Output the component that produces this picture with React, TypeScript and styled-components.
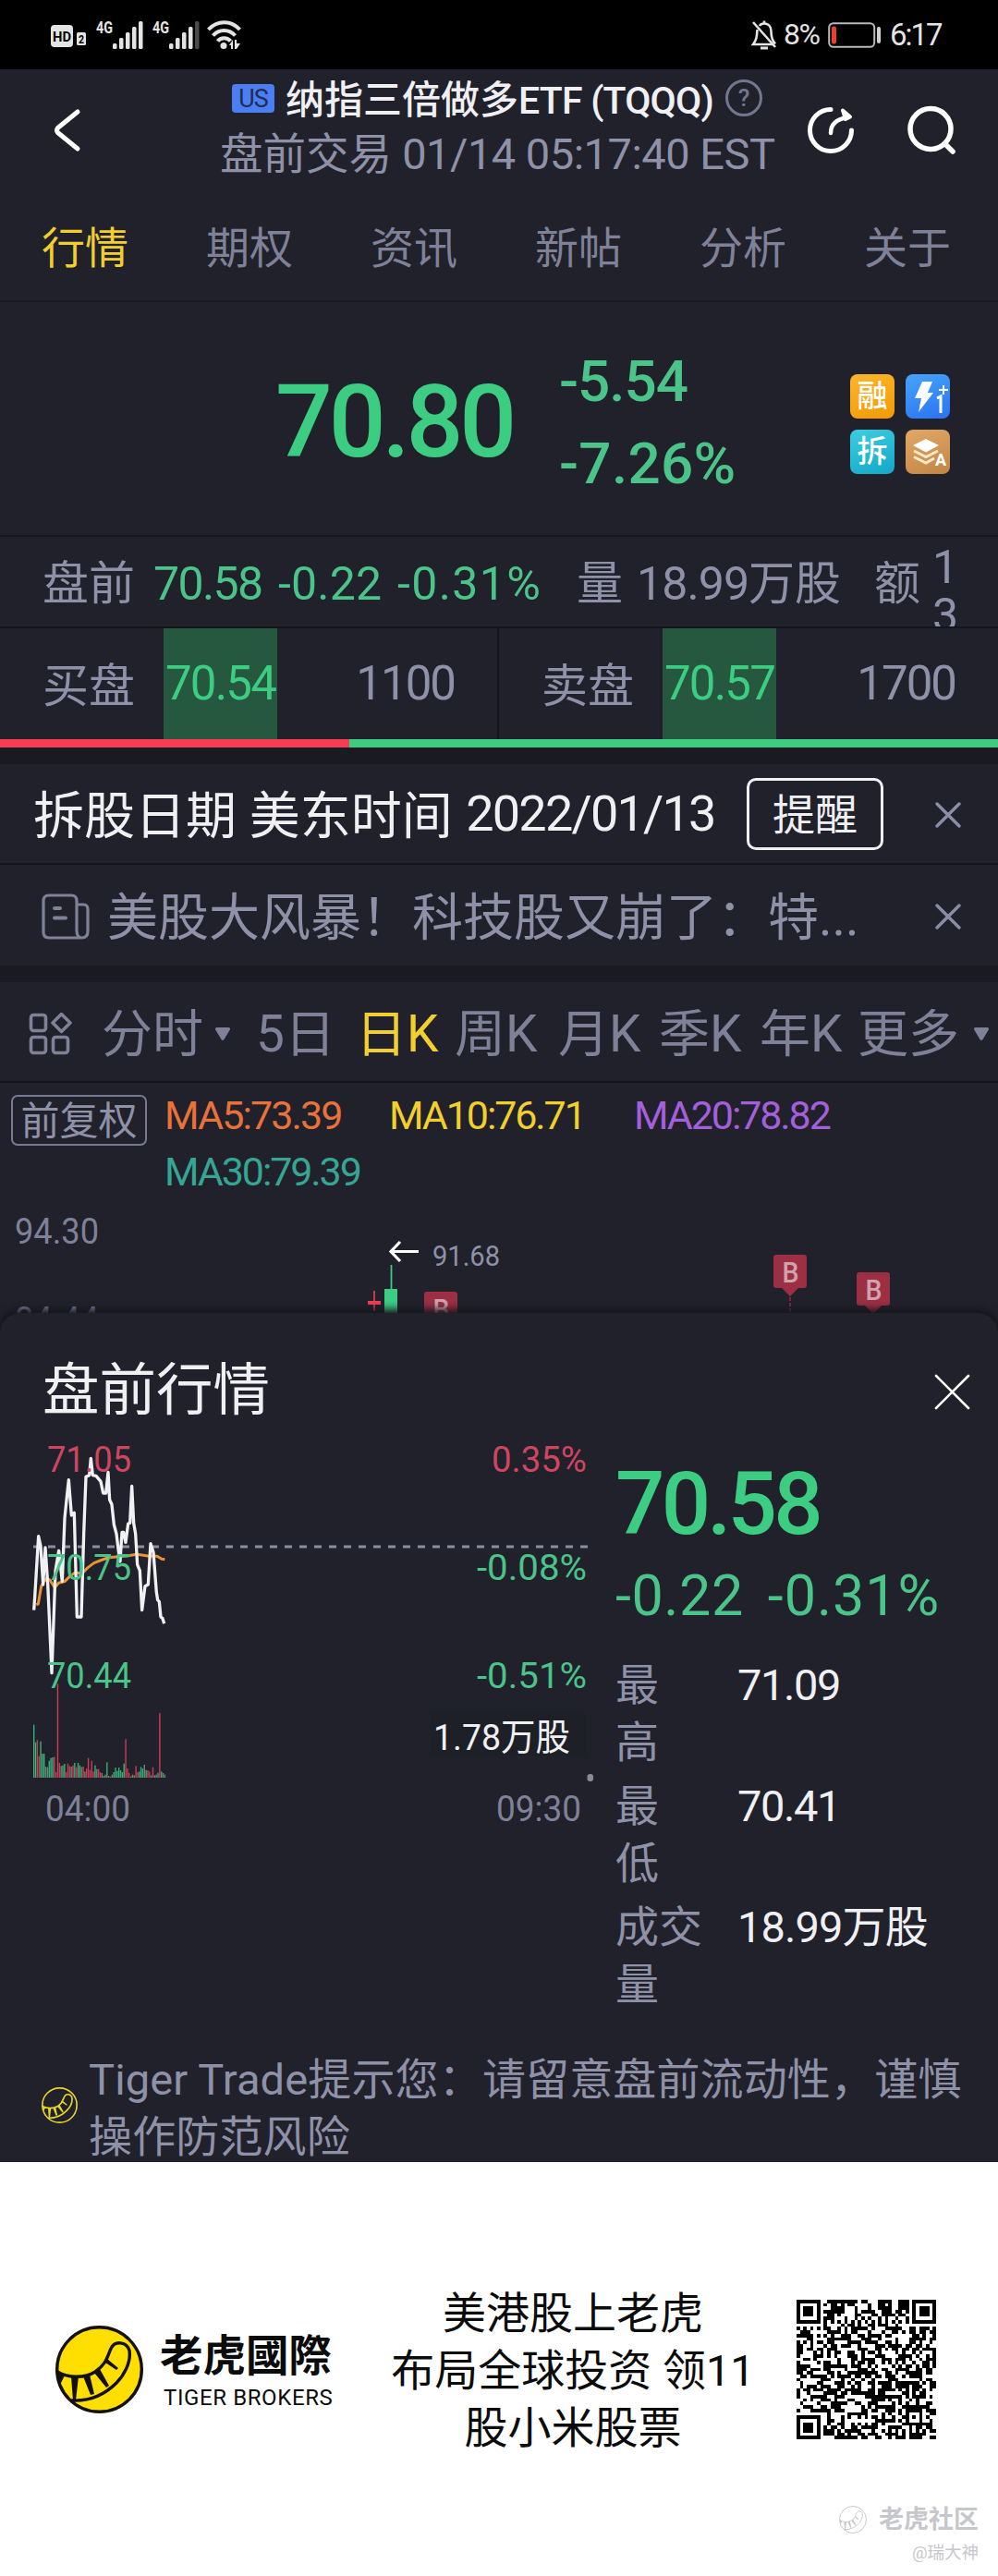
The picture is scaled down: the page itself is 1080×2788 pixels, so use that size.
import type { ReactNode } from 'react';
import styled, { createGlobalStyle } from 'styled-components';

const colors = {
  bg: '#20212b',
  gap: '#1a1a23',
  line: '#15151d',
  muted: '#8f91a9',
  dim: '#7f8198',
  white: '#f0f0f2',
  green: '#3ccd83',
  softGreen: '#4bc489',
  red: '#f63d53',
  yellow: '#f2cf2e',
};

const GlobalStyle = createGlobalStyle`
  * {
    box-sizing: border-box;
  }
  body {
    margin: 0;
    background: #fff;
    font-family: Roboto, 'Noto Sans CJK SC', sans-serif;
    line-height: 1.2;
  }
  svg {
    display: block;
    flex: none;
  }
`;

const Page = styled.div`
  width: 1080px;
  height: 2788px;
  overflow: hidden;
  background: ${colors.bg};
  color: ${colors.muted};
`;

const Text = styled.span<{
  $size: number;
  $color?: string;
  $spacing?: number;
  $weight?: number;
}>`
  font-size: ${(p) => p.$size}px;
  color: ${(p) => p.$color || 'inherit'};
  letter-spacing: ${(p) => p.$spacing || 0}px;
  font-weight: ${(p) => p.$weight || 400};
  white-space: pre;
`;

/* ---------- status bar ---------- */

const StatusBar = styled.div`
  display: flex;
  justify-content: space-between;
  align-items: center;
  height: 75px;
  padding: 0 57px 0 55px;
  background: #000;
`;

const StatusRight = styled.div`
  display: flex;
  align-items: center;
  color: #e4e4e4;
`;

const StatusValue = styled(Text)`
  margin-left: 7px;
  width: 48px;
`;

const Clock = styled(Text)`
  margin-left: 9px;
  width: 60px;
`;

/* ---------- header ---------- */

const Header = styled.header`
  display: grid;
  grid-template-columns: 182px 635px 108px 64px;
  align-items: center;
  height: 132px;
  padding-left: 56px;
`;

const TitleBlock = styled.div`
  display: flex;
  flex-direction: column;
  padding-bottom: 5px;
`;

const TitleLine = styled.div`
  display: flex;
  align-items: center;
  height: 56px;
  padding-left: 13px;
`;

const SubtitleLine = styled.div`
  height: 58px;
  line-height: 58px;
`;

const MarketTag = styled.span`
  flex: none;
  width: 46px;
  height: 31px;
  margin: 0 12px 6px 0;
  border-radius: 4px;
  background: #4b7ef3;
  color: #222c55;
  font-size: 27px;
  letter-spacing: -1px;
  line-height: 32px;
  text-align: center;
`;

const HelpMark = styled.span`
  flex: none;
  width: 40px;
  height: 40px;
  margin: 0 0 8px 13px;
  border: 3px solid #74768e;
  border-radius: 50%;
  color: #74768e;
  font-size: 26px;
  font-weight: 500;
  line-height: 34px;
  text-align: center;
`;

const Tabs = styled.nav`
  display: grid;
  grid-template-columns: repeat(6, 178px);
  align-items: center;
  height: 120px;
  padding: 7px 0 0 45px;
  border-bottom: 2px solid #191a22;
  color: ${colors.dim};
`;

/* ---------- quote ---------- */

const Quote = styled.section`
  display: grid;
  grid-template-columns: 307px 315px 108px;
  align-items: center;
  height: 254px;
  padding: 8px 0 0 298px;
  border-bottom: 2px solid ${colors.line};
`;

const Changes = styled.div`
  display: flex;
  flex-direction: column;
  line-height: 89px;
`;

const Badges = styled.div`
  display: grid;
  grid-template-columns: 48px 48px;
  gap: 12px;
  padding-top: 4px;
`;

const Badge = styled.span<{ $from: string; $to: string }>`
  display: flex;
  align-items: center;
  justify-content: center;
  height: 48px;
  border-radius: 8px;
  background: linear-gradient(160deg, ${(p) => p.$from}, ${(p) => p.$to});
  color: #fff;
  font-size: 33px;
  font-weight: 500;
  line-height: 50px;
`;

const PreMarketRow = styled.div`
  display: grid;
  grid-template-columns: 120px 135px 129px 194px 65px 257px 63px 30px;
  grid-template-rows: 96px;
  align-items: center;
  height: 99px;
  padding: 3px 0 0 46px;
  overflow: hidden;
  border-bottom: 2px solid ${colors.line};
`;

const Amount = styled.span`
  align-self: start;
  width: 28px;
  margin-top: 4px;
  font-size: 50px;
  line-height: 52px;
  word-break: break-all;
`;

const BidAsk = styled.section`
  display: grid;
  grid-template-columns: 1fr 1fr;
  height: 120px;
`;

const Side = styled.div`
  display: grid;
  grid-template-columns: 131px 123px 1fr;
  align-items: center;
  padding: 0 46px;
  &:first-child {
    border-right: 2px solid ${colors.line};
  }
`;

const SideLabel = styled(Text)`
  padding-top: 5px;
`;

const SidePrice = styled.span`
  display: flex;
  align-items: center;
  justify-content: center;
  height: 120px;
  background: #26573f;
  color: ${colors.green};
`;

const SideVolume = styled.span`
  text-align: right;
`;

const RatioBar = styled.div`
  display: flex;
  height: 9px;
  background: ${colors.green};
`;

const RatioBuy = styled.div`
  width: 35%;
  background: ${colors.red};
`;

const Gap = styled.div`
  height: 18px;
  background: ${colors.gap};
`;

/* ---------- notices ---------- */

const Notice = styled.div<{ $line?: boolean }>`
  display: flex;
  align-items: center;
  height: 109px;
  padding: 2px 40px 0 36px;
  border-bottom: ${(p) => (p.$line ? `2px solid ${colors.line}` : 'none')};
`;

const NoticeTitle = styled(Text)`
  padding-top: 3px;
`;

const NoticeDate = styled(Text)`
  margin-left: 3px;
`;

const RemindButton = styled.button`
  width: 148px;
  height: 78px;
  margin: 0 56px 2px auto;
  padding: 0;
  border: 3px solid ${colors.white};
  border-radius: 10px;
  background: none;
  color: ${colors.white};
  font-family: inherit;
  font-size: 46px;
  line-height: 74px;
`;

const NoticeText = styled(Text)`
  flex: 1;
  margin-left: 19px;
  padding-top: 3px;
`;

const NoticeIcon = styled.span`
  margin-left: 9px;
`;

/* ---------- k line ---------- */

const Periods = styled.nav`
  display: grid;
  grid-template-columns: 79px 122px 45px 108px 107px 112px 109px 109px 106px 125px 20px;
  align-items: center;
  height: 109px;
  padding: 5px 0 0 31px;
  border-bottom: 2px solid ${colors.line};
  color: ${colors.dim};
`;

const Averages = styled.div`
  display: grid;
  grid-template-columns: 166px 243px 265px 1fr;
  height: 126px;
  padding: 5px 0 0 12px;
  line-height: 61px;
`;

const AdjustTag = styled.span`
  grid-row: span 2;
  width: 147px;
  height: 55px;
  margin-top: 8px;
  border: 2px solid #777990;
  border-radius: 7px;
  font-size: 42px;
  line-height: 54px;
  text-align: center;
`;

/* ---------- pre-market sheet ---------- */

const Sheet = styled.section`
  position: relative;
  height: 919px;
  margin-top: -25px;
  overflow: hidden;
  border-radius: 22px 22px 0 0;
  background: ${colors.bg};
  box-shadow: 0 -2px 8px 2px #15151c;
`;

const SheetHeader = styled.div`
  display: flex;
  justify-content: space-between;
  align-items: center;
  height: 139px;
  padding: 31px 30px 0 46px;
`;

const SheetBody = styled.div`
  display: grid;
  grid-template-columns: 666px 1fr;
  height: 660px;
`;

const Detail = styled.div`
  display: flex;
  flex-direction: column;
  padding-top: 23px;
`;

const DetailPrice = styled(Text)`
  height: 90px;
  line-height: 90px;
`;

const DetailChanges = styled.div`
  display: flex;
  gap: 26px;
  height: 80px;
  margin: 14px 0 26px;
  line-height: 80px;
`;

const Stat = styled.div`
  display: grid;
  grid-template-columns: 98px 1fr;
  gap: 34px;
  min-height: 131px;
  font-size: 47px;
  line-height: 62px;
`;

const StatLabel = styled.span<{ $narrow?: boolean }>`
  width: ${(p) => (p.$narrow ? 60 : 98)}px;
`;

const StatValue = styled.span<{ $spacing: number }>`
  color: ${colors.white};
  letter-spacing: ${(p) => p.$spacing}px;
`;

const Tip = styled.div`
  display: flex;
  align-items: flex-start;
  padding-left: 45px;
  font-size: 47px;
  letter-spacing: 0.14px;
  line-height: 62px;
  white-space: nowrap;
`;

const TipIcon = styled.span`
  margin: 39px 12px 0 0;
`;

/* ---------- promo ---------- */

const Promo = styled.footer`
  position: relative;
  display: grid;
  grid-template-columns: 113px 242px 410px 1fr;
  align-items: center;
  height: 448px;
  padding-left: 60px;
  background: #fff;
  color: #0c0c0c;
`;

const BrandName = styled.div`
  display: flex;
  flex-direction: column;
  padding-top: 7px;
  line-height: 54px;
`;

const BrandLatin = styled(Text)`
  padding-left: 4px;
  line-height: 36px;
`;

const Slogan = styled.div`
  padding-top: 3px;
  font-size: 47px;
  line-height: 62px;
  text-align: center;
  white-space: pre-line;
`;

const QrHolder = styled.div`
  padding-left: 37px;
`;

const Watermark = styled.div`
  position: absolute;
  right: 21px;
  bottom: 11px;
  display: flex;
  flex-direction: column;
  align-items: flex-end;
  color: #c6c7cb;
`;

const WatermarkLine = styled.div`
  display: flex;
  align-items: center;
  gap: 13px;
  font-size: 27px;
  font-weight: 700;
  line-height: 34px;
`;

const WatermarkUser = styled.div`
  margin-top: 6px;
  font-size: 18.5px;
  line-height: 27px;
`;

/* ---------- icons ---------- */

const StatusIcons = () => (
  <svg width="210" height="40" viewBox="0 0 210 40" fill="#e4e4e4">
    <rect x="0" y="9" width="24" height="24" rx="4" />
    <text x="2" y="26.5" fontSize="15" fontWeight="700" textLength="20" lengthAdjust="spacingAndGlyphs" fill="#000">HD</text>
    <rect x="28" y="17" width="10" height="14" rx="1.5" />
    <text x="30" y="28.5" fontSize="12" fontWeight="700" textLength="6" lengthAdjust="spacingAndGlyphs" fill="#000">2</text>
    <text x="49" y="17.5" fontSize="18" fontWeight="700" textLength="18" lengthAdjust="spacingAndGlyphs">4G</text>
    <text x="110" y="17.5" fontSize="18" fontWeight="700" textLength="18" lengthAdjust="spacingAndGlyphs">4G</text>
    {[0, 1, 2, 3, 4].map((i) => (
      <rect key={i} x={67 + i * 7} y={29 - i * 6} width="4.5" height={6 + i * 6} rx="1.5" />
    ))}
    {[0, 1, 2, 3, 4].map((i) => (
      <rect key={i} x={128 + i * 7} y={29 - i * 6} width="4.5" height={6 + i * 6} rx="1.5" fill={i === 4 ? '#4a4a4a' : '#e4e4e4'} />
    ))}
    <g fill="none" stroke="#e4e4e4" strokeWidth="4">
      <path d="M170.500 14 C180 3.500 195 3.500 204.500 14" />
      <path d="M175.500 20.500 C182 13 193 13 199.500 20.500" />
      <path d="M180.500 26.500 C184 22 191 22 194.500 26.500" />
    </g>
    <circle cx="187" cy="31.500" r="3.500" />
    <path d="M193 31 l4 -6 v10 h-2 v-4z M199 25 h2 v4 h4 l-4 6 h-2z" />
  </svg>
);

const MutedBell = () => (
  <svg width="28" height="34" viewBox="0 0 28 34" fill="none" stroke="#e4e4e4" strokeWidth="2.6">
    <path d="M9 7 C10 5 12 4.500 14 4.500 C19 4.500 21.500 8.500 21.500 13 C21.500 20 22.500 23 26 26.500" />
    <path d="M6.500 11 C6 18 6 22 2 27 H23" />
    <path d="M2 3 L26 30" />
    <path d="M10 31 H18" strokeWidth="3" />
    <path d="M14 1.500 V4.500" />
  </svg>
);

const Battery = () => (
  <svg width="58" height="28" viewBox="0 0 58 28">
    <rect x="1.200" y="1.200" width="49" height="25.600" rx="4.500" fill="none" stroke="#b9b9b9" strokeWidth="2" />
    <rect x="4" y="4.500" width="5" height="19" rx="2" fill="#e8402c" />
    <rect x="53" y="5" width="4" height="18" rx="2" fill="#d0d0d0" />
  </svg>
);

const BackIcon = () => (
  <svg width="32" height="48" viewBox="0 0 32 48" fill="none" stroke="#fff" strokeWidth="5" strokeLinecap="round" strokeLinejoin="round">
    <path d="M28 4 L6.500 21.500 Q4.500 24 6.500 26.500 L28 44" />
  </svg>
);

const ShareIcon = () => (
  <svg width="52" height="52" viewBox="0 0 52 52" fill="none" stroke="#fff" strokeWidth="5" strokeLinecap="round" strokeLinejoin="round">
    <path d="M26 3.500 A22.500 22.500 0 1 0 48.500 26" />
    <path d="M26 29 C26 20 32 14 44 12" strokeWidth="4.500" />
    <path d="M39 4.500 L47 11.500 L42 14 Z" strokeWidth="4" fill="#fff" />
  </svg>
);

const SearchIcon = () => (
  <svg width="54" height="54" viewBox="0 0 54 54" fill="none" stroke="#fff" strokeWidth="5.500" strokeLinecap="round">
    <circle cx="26" cy="25.500" r="22" />
    <path d="M42 42 L50 50" />
  </svg>
);

const CloseIcon = ({ size, color, width }: { size: number; color: string; width: number }) => (
  <svg width={size} height={size} viewBox={`0 0 ${size} ${size}`} stroke={color} strokeWidth={width} strokeLinecap="round">
    <path d={`M2 2 L${size - 2} ${size - 2} M${size - 2} 2 L2 ${size - 2}`} />
  </svg>
);

const NewsIcon = () => (
  <svg width="52" height="50" viewBox="0 0 52 50" fill="none" stroke="#7f8198" strokeWidth="3.200" strokeLinecap="round">
    <path d="M38 12 V40 Q38 48 43.500 48 Q50 48 50 41 V17 Q50 12 45 12 H38 V8 Q38 2 32 2 H8 Q2 2 2 8 V42 Q2 48 8 48 H43" />
    <path d="M14 16 h6 M14 26.500 h12" strokeWidth="4" />
  </svg>
);

const GridIcon = () => (
  <svg width="48" height="46" viewBox="0 0 48 46" fill="none" stroke="#7f8198" strokeWidth="3.600">
    <rect x="2.500" y="2.500" width="16" height="17" rx="3" />
    <rect x="2.500" y="26.500" width="16" height="17" rx="3" />
    <rect x="26.500" y="26.500" width="16" height="17" rx="3" />
    <path d="M35.500 1.500 L45 11 L35.500 20.500 L26 11 Z" strokeLinejoin="round" />
  </svg>
);

const Caret = () => (
  <svg width="18" height="15" viewBox="0 0 18 15" fill="#7f8198">
    <path d="M2.500 0 H15.500 Q18 0.500 16.500 3 L10.500 13 Q9 15 7.500 13 L1.500 3 Q0 0.500 2.500 0Z" />
  </svg>
);

const BoltIcon = () => (
  <svg width="48" height="48" viewBox="0 0 48 48" fill="#fff">
    <path d="M18 8 H29 L24 20 H30 L14 41 L17 26 H10 Z" />
    <path d="M41 12 v10 M36 17 h10" stroke="#fff" strokeWidth="2" />
    <path d="M34 26 L38 24 V42" fill="none" stroke="#fff" strokeWidth="3" />
  </svg>
);

const LayersIcon = () => (
  <svg width="48" height="48" viewBox="0 0 48 48" fill="#fff">
    <path d="M22 10 L36 17 L22 24.500 L8 17 Z" />
    <path d="M9 23 L22 29.500 L35 23 M9 29.500 L22 36 L31 31" fill="none" stroke="#ffe9cc" strokeWidth="3" />
    <text x="32" y="39" fontSize="18" fontWeight="700">A</text>
  </svg>
);

const TailLogo = ({ size, line, fill, width }: { size: number; line: string; fill: string; width: number }) => (
  <svg width={size} height={size} viewBox="0 0 95 95" fill="none" stroke={line} strokeWidth={width} strokeLinecap="round" strokeLinejoin="round">
    <circle cx="47.500" cy="47.500" r={47.5 - width / 2} fill={fill} />
    <path d="M2 50 C14 57 32 57 43 50 C56 41 56 33 60 25 C64 16 77 17 80 27 C82 40 74 54 66 62 C54 74 38 82 18 81" />
    <path
      d="M2 48 L10 54 L5 64 Z M17 55 H25 L22 81 H19 Z M30 55 L37 53 L42 74 L38 75 Z M42 51 L48 47 L58 65 L55 67 Z M54 40 L56 36 L68 46 L66 48 Z"
      fill={line}
      stroke="none"
    />
  </svg>
);

/* ---------- charts ---------- */

const Marker = ({ x, y, dashed }: { x: number; y: number; dashed?: boolean }) => (
  <g transform={`translate(${x} ${y})`}>
    <path d="M3 0 H33 Q36 0 36 3 V33 Q36 36 33 36 H27 L18 45 L9 36 H3 Q0 36 0 33 V3 Q0 0 3 0Z" fill="#9c2f43" />
    <text x="9.500" y="30" fontSize="32" fontWeight="500" textLength="18" lengthAdjust="spacingAndGlyphs" fill="#cfa3ad">B</text>
    {dashed && <path d="M18 46 V70" stroke="#9c2f43" strokeWidth="1.500" strokeDasharray="4 2" />}
  </g>
);

const KLineChart = () => (
  <svg width="1080" height="148" viewBox="0 0 1080 148">
    <text x="16" y="48" fontSize="39" textLength="91" lengthAdjust="spacingAndGlyphs" fill={colors.dim}>94.30</text>
    <text x="16" y="144" fontSize="39" textLength="91" lengthAdjust="spacingAndGlyphs" fill={colors.dim}>84.44</text>
    <path d="M453 56.500 H425 M433 46 L423 56.500 L433 67" fill="none" stroke="#fff" strokeWidth="3.200" />
    <text x="468" y="72" fontSize="31.500" textLength="73" lengthAdjust="spacingAndGlyphs" fill={colors.muted}>91.68</text>
    <path d="M405 99 V121" stroke="#f0405a" strokeWidth="1.600" />
    <rect x="398" y="110" width="14" height="4" fill="#f0405a" />
    <path d="M423.500 71 V98" stroke={colors.green} strokeWidth="1.800" />
    <rect x="416" y="97" width="14" height="50" fill={colors.green} />
    <Marker x={459} y={100} />
    <Marker x={837} y={60} dashed />
    <Marker x={927} y={79} />
  </svg>
);

// samples are kept at three units per pixel of the plot
const pricePoints =
  '50,548 53,505 65,308 72,340 80,465 87,345 95,460 108,752 120,420 131,355 142,455 150,250 155,200 163,125 172,240 181,232 190,570 204,570 212,300 219,115 230,110 235,55 241,110 252,112 267,130 275,168 284,168 291,100 296,190 303,205 310,270 318,300 324,350 330,390 336,295 341,295 348,328 356,268 362,265 368,145 374,265 380,300 386,400 394,420 401,548 411,470 421,465 429,332 438,360 448,490 452,515 457,520 462,570 468,575 473,592';
const averagePoints =
  '58,530 64,528 74,470 82,455 92,445 102,450 118,475 130,460 150,455 165,440 185,425 205,430 225,410 245,395 265,387 290,378 315,375 350,372 385,367 420,372 450,373 465,382 475,383';

// g = falling minute, r = rising minute, n = flat
const volumes =
  'g172 g115 r122 r70 g118 g78 g78 n36 n34 g55 g64 g66 r68 r18 r305 r48 n38 g40 g45 r18 r46 r38 n36 r40 g48 r34 g48 g40 n35 r36 n20 r30 r64 r25 r55 r20 g40 n28 r28 r18 n15 n6 n10 g50 n6 r4 n10 g18 g33 g22 g33 g24 g18 g46 r125 r30 r16 n4 n10 n8 r38 r18 g20 g35 g30 n42 g25 r24 r20 n8 r34 n8 n10 n16 r210 g20 n15 n10'.split(' ');
const volumeColors: Record<string, string> = { g: '#37b178', r: '#c93d56', n: '#6f8573' };

const PreMarketChart = () => (
  <svg width="666" height="440" viewBox="0 0 666 440">
    <path d="M36 114 H636" stroke="#8a8ca1" strokeWidth="3" strokeDasharray="8 8" />
    {volumes.map((v, i) => {
      const h = Number(v.slice(1)) / 3;
      return <rect key={i} x={36 + i * 1.84} y={364 - h} width="1.400" height={h} fill={volumeColors[v[0]]} />;
    })}
    <g transform="translate(20 0) scale(0.3333)" fill="none" strokeLinejoin="round">
      <polyline points={averagePoints} stroke="#ee9130" strokeWidth="9" />
      <polyline points={pricePoints} stroke="#f1f1f3" strokeWidth="10" />
    </g>
    <g fontSize="39.500">
      <text x="51" y="33" textLength="91" lengthAdjust="spacingAndGlyphs" fill="#cf4560">71.05</text>
      <text x="51" y="150" textLength="91" lengthAdjust="spacingAndGlyphs" fill={colors.softGreen}>70.75</text>
      <text x="51" y="267" textLength="91" lengthAdjust="spacingAndGlyphs" fill={colors.softGreen}>70.44</text>
      <text x="532" y="33" textLength="103" lengthAdjust="spacingAndGlyphs" fill="#cf4560">0.35%</text>
      <text x="516" y="150" textLength="119" lengthAdjust="spacingAndGlyphs" fill={colors.softGreen}>-0.08%</text>
      <text x="516" y="267" textLength="119" lengthAdjust="spacingAndGlyphs" fill={colors.softGreen}>-0.51%</text>
      <rect x="465" y="293" width="169" height="47" fill="#1e2027" />
      <text x="469" y="334" textLength="148" lengthAdjust="spacingAndGlyphs" fill={colors.white}>1.78万股</text>
      <text x="49" y="411" textLength="92" lengthAdjust="spacingAndGlyphs" fill={colors.dim}>04:00</text>
      <text x="537" y="411" textLength="92" lengthAdjust="spacingAndGlyphs" fill={colors.dim}>09:30</text>
    </g>
    <rect x="635.500" y="360" width="6.500" height="8" rx="3" fill="#8b8c96" />
  </svg>
);

const QR_SIZE = 41;

const finder = (x: number, y: number) => {
  const edge = Math.max(Math.abs(x - 3), Math.abs(y - 3));
  return edge === 3 || edge <= 1;
};

const isDark = (x: number, y: number, noise: boolean) => {
  const far = QR_SIZE - 8;
  if (x < 8 && y < 8) return x < 7 && y < 7 && finder(x, y);
  if (x >= far && y < 8) return x > far && y < 7 && finder(x - far - 1, y);
  if (x < 8 && y >= far) return x < 7 && y > far && finder(x, y - far - 1);
  const align = Math.max(Math.abs(x - 34), Math.abs(y - 34));
  if (align <= 2) return align !== 1;
  if (x === 6) return y % 2 === 0;
  if (y === 6) return x % 2 === 0;
  return noise;
};

const qrPath = (() => {
  let seed = 20220114;
  let d = '';
  for (let y = 0; y < QR_SIZE; y++) {
    for (let x = 0; x < QR_SIZE; x++) {
      seed = (seed * 1103515245 + 12345) % 2147483648;
      if (isDark(x, y, (seed >> 12) % 100 < 51)) d += `M${x} ${y}h1v1h-1z`;
    }
  }
  return d;
})();

const QrCode = () => (
  <svg width="151" height="151" viewBox={`0 0 ${QR_SIZE} ${QR_SIZE}`} shapeRendering="crispEdges">
    <path d={qrPath} fill="#000" />
  </svg>
);

/* ---------- page ---------- */

const tabs = ['行情', '期权', '资讯', '新帖', '分析', '关于'];
const periods = ['5日', '日K', '周K', '月K', '季K', '年K', '更多'];

const SideCell = ({ label, price, volume }: { label: string; price: string; volume: string }) => (
  <Side>
    <SideLabel $size={50}>{label}</SideLabel>
    <SidePrice>
      <Text $size={51} $spacing={-1.8}>{price}</Text>
    </SidePrice>
    <SideVolume>
      <Text $size={51} $spacing={-2}>{volume}</Text>
    </SideVolume>
  </Side>
);

const StatRow = ({
  label,
  narrow,
  spacing = -1.4,
  children,
}: {
  label: string;
  narrow?: boolean;
  spacing?: number;
  children: ReactNode;
}) => (
  <Stat>
    <StatLabel $narrow={narrow}>{label}</StatLabel>
    <StatValue $spacing={spacing}>{children}</StatValue>
  </Stat>
);

const App = () => {
  return (
    <>
      <GlobalStyle />
      <Page>
        <StatusBar>
          <StatusIcons />
          <StatusRight>
            <MutedBell />
            <StatusValue $size={32} $spacing={-1.6}>8%</StatusValue>
            <Battery />
            <Clock $size={33} $spacing={-2}>6:17</Clock>
          </StatusRight>
        </StatusBar>

        <Header>
          <BackIcon />
          <TitleBlock>
            <TitleLine>
              <MarketTag>US</MarketTag>
              <Text $size={42} $weight={500} $color={colors.white}>纳指三倍做多</Text>
              <Text $size={41} $weight={500} $color={colors.white} $spacing={-0.8}>ETF (TQQQ)</Text>
              <HelpMark>?</HelpMark>
            </TitleLine>
            <SubtitleLine>
              <Text $size={46.5}>盘前交易</Text>
              <Text $size={47} $spacing={-0.5}> 01/14 05:17:40 EST</Text>
            </SubtitleLine>
          </TitleBlock>
          <ShareIcon />
          <SearchIcon />
        </Header>

        <Tabs>
          {tabs.map((tab, i) => (
            <Text key={tab} $size={47} $color={i === 0 ? colors.yellow : undefined}>{tab}</Text>
          ))}
        </Tabs>

        <Quote>
          <Text $size={109} $weight={500} $color={colors.green} $spacing={-4.2}>70.80</Text>
          <Changes>
            <Text $size={62} $weight={500} $color={colors.softGreen} $spacing={-1}>-5.54</Text>
            <Text $size={62} $weight={500} $color={colors.softGreen} $spacing={0.3}>-7.26%</Text>
          </Changes>
          <Badges>
            <Badge $from="#fdb52c" $to="#f29a05">融</Badge>
            <Badge $from="#45a5fb" $to="#2a72f3"><BoltIcon /></Badge>
            <Badge $from="#3dcde0" $to="#12a8c9">拆</Badge>
            <Badge $from="#e0a868" $to="#c28543"><LayersIcon /></Badge>
          </Badges>
        </Quote>

        <PreMarketRow>
          <Text $size={50}>盘前</Text>
          <Text $size={50} $spacing={-1.6} $color={colors.softGreen}>70.58</Text>
          <Text $size={50} $spacing={0.2} $color={colors.softGreen}>-0.22</Text>
          <Text $size={50} $spacing={1.4} $color={colors.softGreen}>-0.31%</Text>
          <Text $size={50}>量</Text>
          <span>
            <Text $size={50} $spacing={-0.9}>18.99</Text>
            <Text $size={50}>万股</Text>
          </span>
          <Text $size={50}>额</Text>
          <Amount>13</Amount>
        </PreMarketRow>

        <BidAsk>
          <SideCell label="买盘" price="70.54" volume="1100" />
          <SideCell label="卖盘" price="70.57" volume="1700" />
        </BidAsk>
        <RatioBar>
          <RatioBuy />
        </RatioBar>
        <Gap />

        <Notice $line>
          <NoticeTitle $size={55} $color={colors.white}>拆股日期 美东时间</NoticeTitle>
          <NoticeDate $size={54} $spacing={-1.8} $color={colors.white}> 2022/01/13</NoticeDate>
          <RemindButton>提醒</RemindButton>
          <CloseIcon size={28} color="#8b8da5" width={3.4} />
        </Notice>
        <Notice>
          <NoticeIcon><NewsIcon /></NoticeIcon>
          <NoticeText $size={55}>美股大风暴！科技股又崩了：特...</NoticeText>
          <CloseIcon size={28} color="#8b8da5" width={3.4} />
        </Notice>
        <Gap />

        <Periods>
          <GridIcon />
          <Text $size={55}>分时</Text>
          <Caret />
          {periods.map((period, i) => (
            <Text key={period} $size={55} $color={i === 1 ? colors.yellow : undefined}>{period}</Text>
          ))}
          <Caret />
        </Periods>

        <Averages>
          <AdjustTag>前复权</AdjustTag>
          <Text $size={43} $spacing={-1.9} $color="#e9713a">MA5:73.39</Text>
          <Text $size={43} $spacing={-2.1} $color={colors.yellow}>MA10:76.71</Text>
          <Text $size={43} $spacing={-2.1} $color="#a45fdb">MA20:78.82</Text>
          <Text $size={43} $spacing={-2.1} $color="#36a594">MA30:79.39</Text>
        </Averages>
        <KLineChart />

        <Sheet>
          <SheetHeader>
            <Text $size={61.5} $color={colors.white}>盘前行情</Text>
            <CloseIcon size={39} color="#fff" width={2.6} />
          </SheetHeader>
          <SheetBody>
            <PreMarketChart />
            <Detail>
              <DetailPrice $size={94} $weight={500} $color={colors.green} $spacing={-3.8}>70.58</DetailPrice>
              <DetailChanges>
                <Text $size={61} $color={colors.softGreen} $spacing={0.6}>-0.22</Text>
                <Text $size={61} $color={colors.softGreen} $spacing={1}>-0.31%</Text>
              </DetailChanges>
              <StatRow label="最高" narrow>71.09</StatRow>
              <StatRow label="最低" narrow>70.41</StatRow>
              <StatRow label="成交量" spacing={-0.9}>18.99万股</StatRow>
            </Detail>
          </SheetBody>
          <Tip>
            <TipIcon>
              <TailLogo size={39} line="#e8d62a" fill="none" width={4} />
            </TipIcon>
            <span>
              Tiger Trade提示您：请留意盘前流动性，谨慎
              <br />
              操作防范风险
            </span>
          </Tip>
        </Sheet>

        <Promo>
          <TailLogo size={95} line="#14110a" fill="#fedf00" width={3.4} />
          <BrandName>
            <Text $size={46.5} $weight={700}>老虎國際</Text>
            <BrandLatin $size={24} $spacing={0.6}>TIGER BROKERS</BrandLatin>
          </BrandName>
          <Slogan>{'美港股上老虎\n布局全球投资 领11\n股小米股票'}</Slogan>
          <QrHolder>
            <QrCode />
          </QrHolder>
          <Watermark>
            <WatermarkLine>
              <TailLogo size={30} line="#c6c7cb" fill="none" width={3} />
              老虎社区
            </WatermarkLine>
            <WatermarkUser>@瑞大神</WatermarkUser>
          </Watermark>
        </Promo>
      </Page>
    </>
  );
};

export default App;
